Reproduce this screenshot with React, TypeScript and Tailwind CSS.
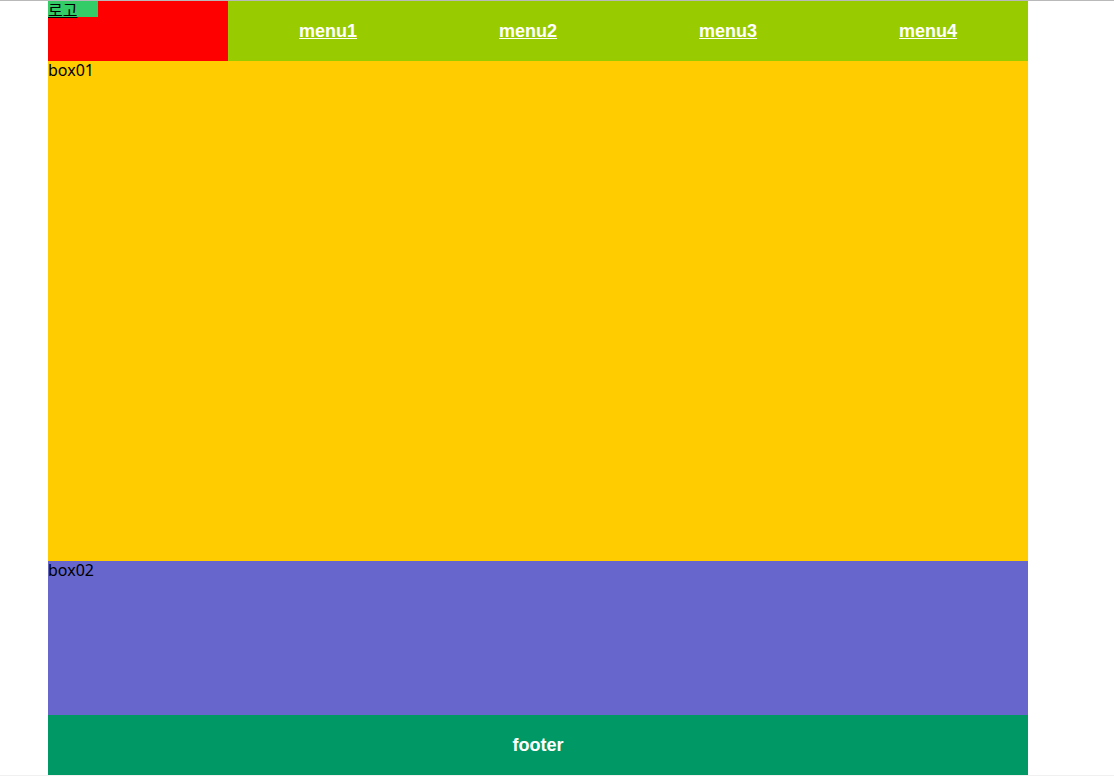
import React from "react";

export default function App() {
  const menus = ["menu1", "menu2", "menu3", "menu4"];
  return (
    <div className="w-[1114px] h-[776px] bg-white flex flex-col overflow-hidden">
      <div className="h-px bg-[#b9b9b9] shrink-0" />
      <div className="w-[980px] ml-[48px] flex flex-col shrink-0">
        <header className="h-[60px] flex">
          <div className="w-[180px] bg-[#ff0000]">
            <a
              href="#"
              className="block w-[50px] h-[16px] bg-[#33cc66] text-black underline text-[16px] leading-[16px] font-['Noto_Sans_CJK_KR',sans-serif]"
            >
              로고
            </a>
          </div>
          <nav className="flex-1 bg-[#99cc00] flex">
            {menus.map((m) => (
              <a
                key={m}
                href="#"
                className="w-[200px] flex items-center justify-center pt-px text-white font-bold underline text-[18px] font-['Liberation_Sans',Arial,sans-serif]"
              >
                {m}
              </a>
            ))}
          </nav>
        </header>
        <section className="h-[500px] bg-[#ffcc00] text-black text-[16px] leading-[18px] font-['Noto_Sans','Open_Sans',sans-serif]">
          box01
        </section>
        <section className="h-[154px] bg-[#6666cc] text-black text-[16px] leading-[18px] font-['Noto_Sans','Open_Sans',sans-serif]">
          box02
        </section>
        <footer className="h-[60px] bg-[#009966] flex items-center justify-center text-white font-bold text-[18px] font-['Liberation_Sans',Arial,sans-serif]">
          footer
        </footer>
      </div>
      <div className="h-px bg-[#f0f0f0] shrink-0" />
    </div>
  );
}
